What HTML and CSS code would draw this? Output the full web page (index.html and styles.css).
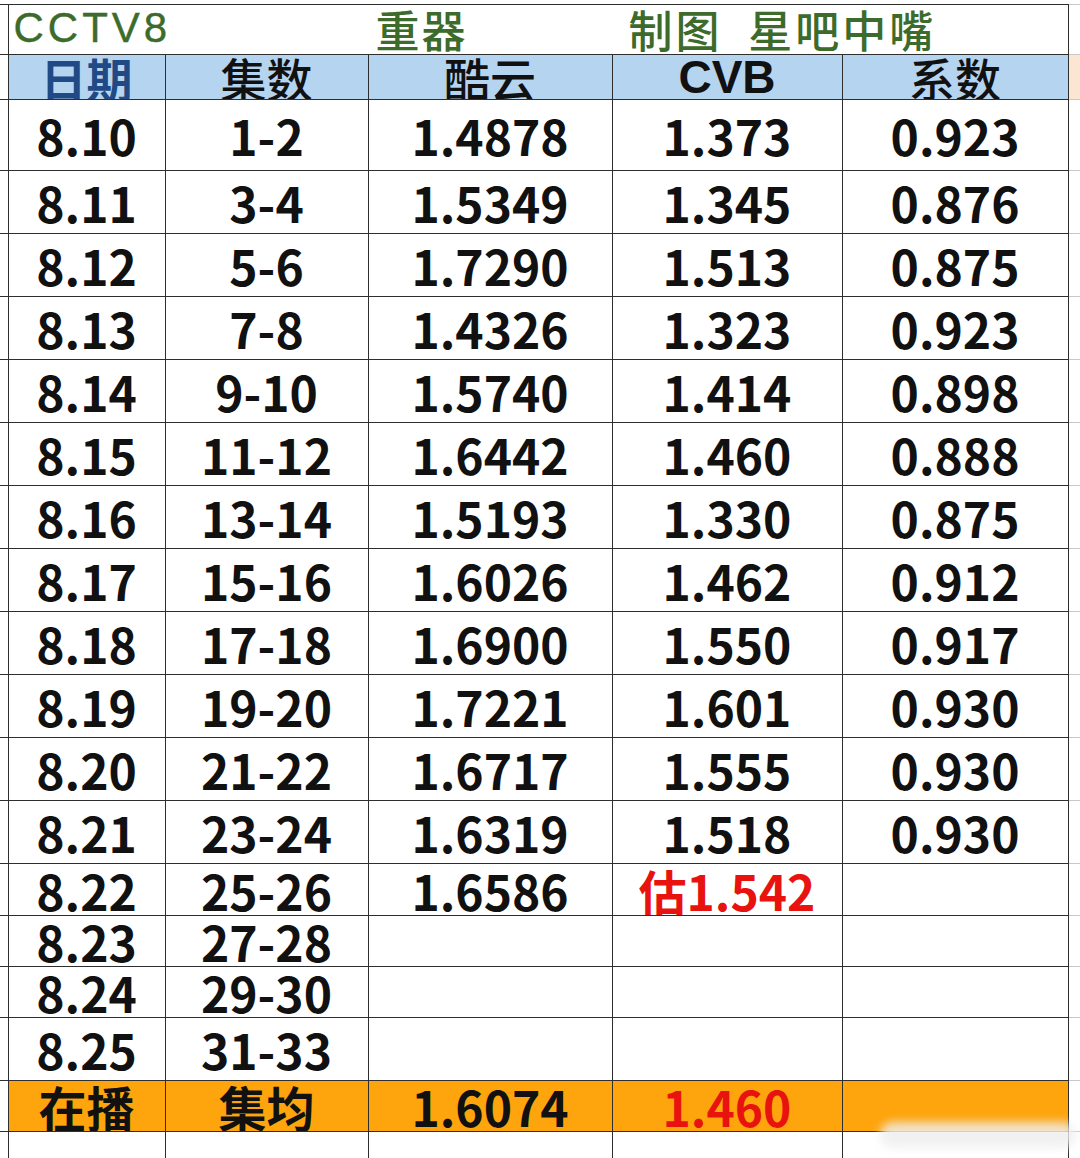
FILE: index.html
```html
<!DOCTYPE html>
<html lang="zh-CN">
<head>
<meta charset="utf-8">
<title>CCTV8 重器</title>
<link rel="stylesheet" href="styles.css">
</head>
<body>
<div class="sheet">
<table class="grid">
  <colgroup>
    <col class="c-edge-l">
    <col class="c-date">
    <col class="c-ep">
    <col class="c-ky">
    <col class="c-cvb">
    <col class="c-coef">
    <col class="c-edge-r">
  </colgroup>
  <tr class="r-title">
    <td class="edge-l"></td>
    <td colspan="5" class="title-cell">
      <div class="title">
        <span class="t-channel">CCTV8</span>
        <span class="t-show">重器</span>
        <span class="t-credit">制图&nbsp;&nbsp;星吧中嘴</span>
      </div>
    </td>
    <td class="edge-r"></td>
  </tr>
  <tr class="r-head">
    <td class="edge-l"></td>
    <td class="hd hd-blue">日期</td>
    <td class="hd">集数</td>
    <td class="hd">酷云</td>
    <td class="hd hd-latin">CVB</td>
    <td class="hd">系数</td>
    <td class="edge-r edge-head"></td>
  </tr>
  <tr class="r-first"><td class="edge-l"></td><td>8.10</td><td>1-2</td><td>1.4878</td><td>1.373</td><td>0.923</td><td class="edge-r"></td></tr>
  <tr class="r-std"><td class="edge-l"></td><td>8.11</td><td>3-4</td><td>1.5349</td><td>1.345</td><td>0.876</td><td class="edge-r"></td></tr>
  <tr class="r-std"><td class="edge-l"></td><td>8.12</td><td>5-6</td><td>1.7290</td><td>1.513</td><td>0.875</td><td class="edge-r"></td></tr>
  <tr class="r-std"><td class="edge-l"></td><td>8.13</td><td>7-8</td><td>1.4326</td><td>1.323</td><td>0.923</td><td class="edge-r"></td></tr>
  <tr class="r-std"><td class="edge-l"></td><td>8.14</td><td>9-10</td><td>1.5740</td><td>1.414</td><td>0.898</td><td class="edge-r"></td></tr>
  <tr class="r-std"><td class="edge-l"></td><td>8.15</td><td>11-12</td><td>1.6442</td><td>1.460</td><td>0.888</td><td class="edge-r"></td></tr>
  <tr class="r-std"><td class="edge-l"></td><td>8.16</td><td>13-14</td><td>1.5193</td><td>1.330</td><td>0.875</td><td class="edge-r"></td></tr>
  <tr class="r-std"><td class="edge-l"></td><td>8.17</td><td>15-16</td><td>1.6026</td><td>1.462</td><td>0.912</td><td class="edge-r"></td></tr>
  <tr class="r-std"><td class="edge-l"></td><td>8.18</td><td>17-18</td><td>1.6900</td><td>1.550</td><td>0.917</td><td class="edge-r"></td></tr>
  <tr class="r-std"><td class="edge-l"></td><td>8.19</td><td>19-20</td><td>1.7221</td><td>1.601</td><td>0.930</td><td class="edge-r"></td></tr>
  <tr class="r-std"><td class="edge-l"></td><td>8.20</td><td>21-22</td><td>1.6717</td><td>1.555</td><td>0.930</td><td class="edge-r"></td></tr>
  <tr class="r-std"><td class="edge-l"></td><td>8.21</td><td>23-24</td><td>1.6319</td><td>1.518</td><td>0.930</td><td class="edge-r"></td></tr>
  <tr class="r-short"><td class="edge-l"></td><td>8.22</td><td>25-26</td><td>1.6586</td><td class="red">估1.542</td><td></td><td class="edge-r"></td></tr>
  <tr class="r-short2"><td class="edge-l"></td><td>8.23</td><td>27-28</td><td></td><td></td><td></td><td class="edge-r"></td></tr>
  <tr class="r-short2"><td class="edge-l"></td><td>8.24</td><td>29-30</td><td></td><td></td><td></td><td class="edge-r"></td></tr>
  <tr class="r-std"><td class="edge-l"></td><td>8.25</td><td>31-33</td><td></td><td></td><td></td><td class="edge-r"></td></tr>
  <tr class="r-total"><td class="edge-l"></td><td>在播</td><td>集均</td><td>1.6074</td><td class="red">1.460</td><td></td><td class="edge-r"></td></tr>
  <tr class="r-tail"><td class="edge-l"></td><td></td><td></td><td></td><td></td><td></td><td class="edge-r"></td></tr>
</table>
<div class="watermark"></div>
</div>
</body>
</html>
```

FILE: styles.css
```css
html, body {
  margin: 0;
  padding: 0;
  background: #ffffff;
  overflow: hidden;
}
body {
  width: 1080px;
  height: 1158px;
}
.sheet {
  position: relative;
  padding-top: 4px;
  width: 1080px;
  height: 1154px;
  overflow: hidden;
}
.grid {
  width: 1080px;
  table-layout: fixed;
  border-collapse: collapse;
  font-family: "Noto Sans CJK SC", "Noto Sans", sans-serif;
  font-weight: 700;
  font-size: 48px;
  line-height: 1;
  color: #111111;
}
.c-edge-l { width: 8px; }
.c-date { width: 157px; }
.c-ep { width: 203px; }
.c-ky { width: 244px; }
.c-cvb { width: 230px; }
.c-coef { width: 226px; }
.c-edge-r { width: 12px; }

.grid td {
  border: 1px solid #2e2e2e;
  padding: 0;
  text-align: center;
  vertical-align: middle;
  white-space: nowrap;
  overflow: hidden;
}
.grid td.edge-l {
  border-left: none;
  border-right: none;
}
.grid td.edge-r {
  border-left: none;
  border-right: none;
  border-top-color: #c8c8c8;
  border-bottom-color: #c8c8c8;
}
.grid td.edge-head {
  background: #fbe6d4;
}

.r-title { height: 50px; }
.r-head { height: 44px; }
.r-first { height: 71px; }
.r-std { height: 63px; }
.r-short { height: 52px; }
.r-short2 { height: 51px; }
.r-total { height: 51px; }
.r-tail { height: 51px; }

.grid td.title-cell {
  text-align: left;
  vertical-align: top;
}
.title {
  display: grid;
  grid-template-columns: 362px 253px auto;
  padding-left: 5px;
  color: #3c6b2b;
  height: 49px;
  overflow: visible;
}
.t-channel {
  font-family: "Liberation Sans", Arial, sans-serif;
  font-weight: 400;
  font-size: 42px;
  letter-spacing: 4px;
  line-height: 46px;
  -webkit-text-stroke: 0.4px #3c6b2b;
}
.t-show, .t-credit {
  font-family: "Noto Sans CJK SC", sans-serif;
  font-weight: 500;
  font-size: 44px;
  line-height: 49px;
  letter-spacing: 2px;
}
.t-credit {
  letter-spacing: 3px;
}

.r-head td.hd {
  background: #b5d4ef;
  font-weight: 500;
  font-size: 46px;
  line-height: 44px;
  vertical-align: bottom;
  color: #111111;
}
.r-head td.hd-blue {
  color: #1f4a85;
  font-weight: 700;
}
.r-head td.hd-latin {
  font-family: "Liberation Sans", Arial, sans-serif;
  font-weight: 700;
  font-size: 46px;
}

.r-total td {
  background: #fea40c;
}
.r-total td.edge-l,
.r-total td.edge-r {
  background: #ffffff;
}
.grid td.red {
  color: #e8120f;
}

.watermark {
  position: absolute;
  left: 880px;
  top: 1122px;
  width: 196px;
  height: 26px;
  border-radius: 14px;
  background: rgba(238, 238, 238, 0.85);
  filter: blur(5px);
}
```
